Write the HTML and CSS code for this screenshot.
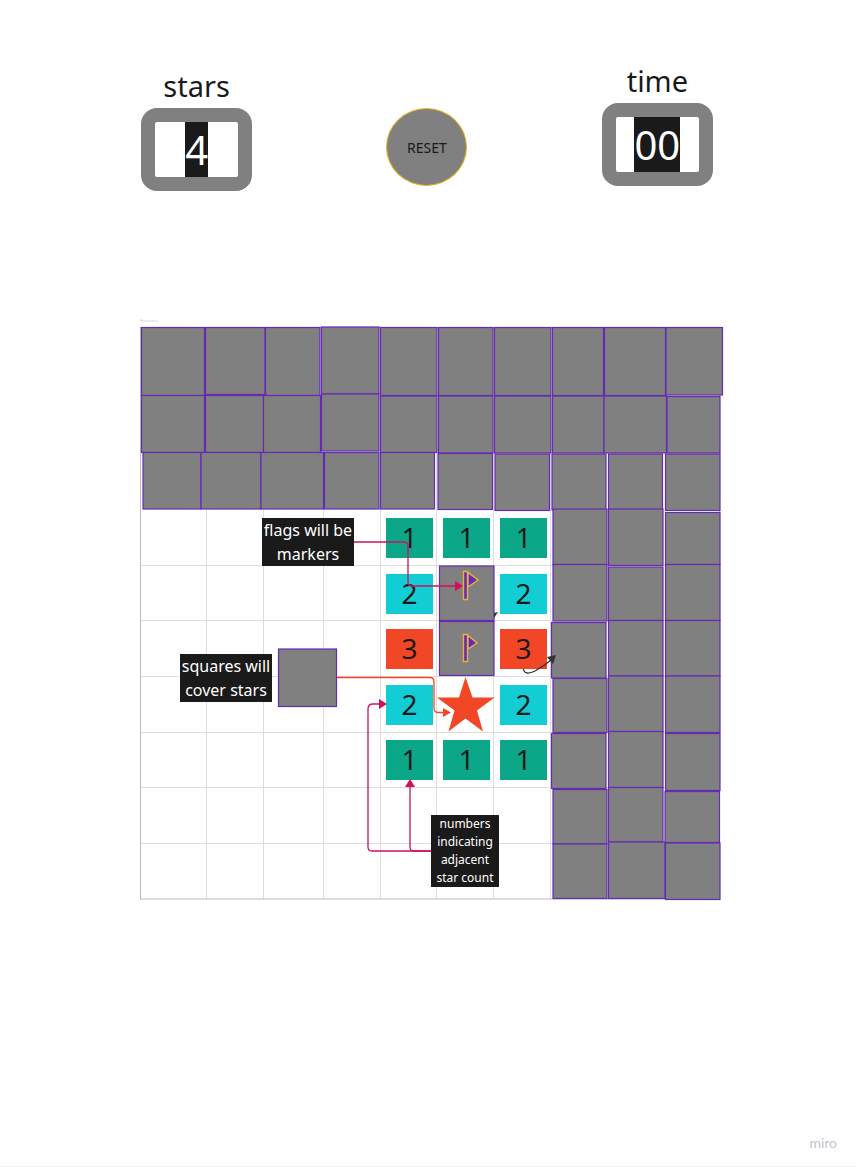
FILE: index.html
```html
<!DOCTYPE html>
<html lang="en">
<head>
<meta charset="utf-8">
<title>Star finder board</title>
<link rel="stylesheet" href="styles.css">
</head>
<body>
<main class="page">
  <header class="toolbar">
    <section class="counter">
      <h2 class="counter-label" id="stars-label">stars</h2>
      <div class="counter-frame"><output class="counter-value" aria-labelledby="stars-label">4</output></div>
    </section>
    <button class="reset" type="button">RESET</button>
    <section class="counter counter-time">
      <h2 class="counter-label" id="time-label">time</h2>
      <div class="counter-frame"><output class="counter-value" aria-labelledby="time-label">00</output></div>
    </section>
  </header>

  <section class="canvas">
    <p class="frame-title">Boundary</p>

    <svg class="layer" viewBox="140 316 584 586" aria-hidden="true">
      <g class="grid-lines">
        <path d="M206.500 327V899M263.500 327V899M323.500 327V899M380.500 327V899M436.500 327V899M493.500 327V899M550.500 327V899"/>
        <path d="M141 565.500H720M141 620.500H720M141 676.500H720M141 732.500H720M141 787.500H720M141 843.500H720"/>
      </g>
      <rect class="outline" x="140.500" y="327.500" width="579" height="571.500"/>
      <g class="tiles">
        <rect x="141.500" y="327.500" width="63" height="68"/>
        <rect x="205.500" y="327.500" width="59.500" height="67"/>
        <rect x="265.500" y="327.500" width="54.500" height="68"/>
        <rect x="321.500" y="327" width="57.500" height="67"/>
        <rect x="380.500" y="327.500" width="56.500" height="68"/>
        <rect x="438.500" y="327.500" width="54.500" height="68"/>
        <rect x="494.500" y="327.500" width="56.500" height="68"/>
        <rect x="552.500" y="327.500" width="51" height="68"/>
        <rect x="604.500" y="327.500" width="61" height="68"/>
        <rect x="666" y="327.500" width="56.500" height="67.500"/>

        <rect x="141.500" y="395.500" width="63" height="57"/>
        <rect x="205.500" y="395.500" width="58" height="57"/>
        <rect x="263.500" y="395.500" width="57" height="57"/>
        <rect x="321.500" y="394" width="57.500" height="57"/>
        <rect x="380.500" y="396" width="56.500" height="56.500"/>
        <rect x="438.500" y="396" width="54.500" height="57"/>
        <rect x="494.500" y="396" width="56.500" height="57"/>
        <rect x="552.500" y="396" width="51.500" height="57"/>
        <rect x="604" y="396" width="62.500" height="57"/>
        <rect x="667" y="396.500" width="53" height="56.500"/>

        <rect x="143" y="452.500" width="58" height="56.500"/>
        <rect x="201" y="452.500" width="60" height="56.500"/>
        <rect x="261" y="452.500" width="62.500" height="56.500"/>
        <rect x="324.500" y="452.500" width="54.500" height="56.500"/>
        <rect x="380.500" y="452.500" width="54" height="56.500"/>
        <rect x="438" y="453.500" width="54.500" height="56"/>
        <rect x="495" y="454" width="54.500" height="56.500"/>
        <rect x="552" y="454" width="54" height="56"/>
        <rect x="608.500" y="454" width="54" height="55.500"/>
        <rect x="665.500" y="454" width="54.500" height="56.500"/>

        <rect x="553" y="509" width="54" height="55.500"/>
        <rect x="553" y="564.500" width="54" height="56.500"/>
        <rect x="553" y="678.500" width="54" height="54"/>
        <rect x="551.500" y="622.500" width="54.500" height="55.500"/>
        <rect x="551.500" y="733.500" width="54.500" height="55"/>
        <rect x="553" y="789.500" width="54" height="54.500"/>
        <rect x="553" y="844" width="54" height="54.500"/>

        <rect x="608.500" y="509" width="54.500" height="56.500"/>
        <rect x="608.500" y="567" width="54.500" height="53.500"/>
        <rect x="608.500" y="620.500" width="54.500" height="55.500"/>
        <rect x="608.500" y="676" width="54.500" height="55.500"/>
        <rect x="608.500" y="731.500" width="54.500" height="56"/>
        <rect x="608.500" y="787.500" width="54.500" height="54.500"/>
        <rect x="608.500" y="842" width="56.500" height="56.500"/>

        <rect x="665.500" y="512.500" width="54.500" height="52"/>
        <rect x="665.500" y="564.500" width="54.500" height="56"/>
        <rect x="665.500" y="620.500" width="54.500" height="55.500"/>
        <rect x="665.500" y="676" width="54.500" height="56.500"/>
        <rect x="665.500" y="733.500" width="54.500" height="57"/>
        <rect x="665" y="791.500" width="54.500" height="51"/>
        <rect x="665.500" y="843" width="54.500" height="56.500"/>

        <rect x="439.500" y="566" width="54.500" height="54.500"/>
        <rect x="439.500" y="621.500" width="54.500" height="54"/>
        <rect x="278.500" y="649" width="58" height="57.500"/>
      </g>
      <path class="star" d="M465.500 677L472.500 697.500H494.500L477 710.500L483 731.500L465.500 718.500L448.500 731.500L454.500 710.500L437 697.500H459Z"/>
      <g class="flag">
        <path d="M463.500 571.500h4v28h-4zM468 572.500v14.500l10-7z"/>
        <path d="M463.500 634.500h4v27h-4zM468 635.500v13.500l9-6z"/>
      </g>
    </svg>

    <div class="numbers">
      <span class="num one">1</span><span class="num one">1</span><span class="num one">1</span>
      <span class="num two">2</span><span></span><span class="num two">2</span>
      <span class="num three">3</span><span></span><span class="num three">3</span>
      <span class="num two">2</span><span></span><span class="num two">2</span>
      <span class="num one">1</span><span class="num one">1</span><span class="num one">1</span>
    </div>

    <svg class="layer" viewBox="140 316 584 586" aria-hidden="true">
      <g class="wire pink">
        <path d="M354 542H404Q408 542 408 546V582Q408 586 412 586H456"/>
        <path d="M431 851H372Q368 851 368 847V709Q368 704 373 704H380"/>
        <path d="M431 851H414Q410 851 410 847V786"/>
        <path class="head" d="M455 581L463 586L455 591ZM379 699L387 704L379 709ZM405 787L410 779L415 787Z"/>
      </g>
      <g class="wire orange">
        <path d="M337 677.500H430Q434 677.500 434 682V708Q434 712.500 438 712.500H444"/>
        <path class="head" d="M443 708L451 712.500L443 717Z"/>
      </g>
      <g class="wire dark">
        <path d="M523.500 669C524 674 529 674 535 671Q544 666 551 660"/>
        <path class="head" d="M547 657L556 655L553 664ZM494 613L498 612L494 618Z"/>
      </g>
    </svg>

    <p class="note note-flags">flags will be markers</p>
    <p class="note note-squares">squares will cover stars</p>
    <p class="note note-small note-numbers">numbers indicating adjacent star&nbsp;count</p>
  </section>

  <footer class="footer">miro</footer>
</main>
</body>
</html>
```
FILE: styles.css
```css
* { box-sizing: border-box; }

body {
  margin: 0;
  background: #fff;
  color: #1a1a1a;
  font-family: "Noto Sans", "Open Sans", sans-serif;
}

.page {
  display: flex;
  flex-direction: column;
  align-items: center;
  min-height: 100vh;
  padding-top: 61px;
  border-bottom: 1px solid #eee;
}

/* Counters and reset */
.toolbar {
  display: flex;
  justify-content: space-between;
  align-items: flex-start;
  width: 66.8%;
  min-width: 400px;
  margin-right: 2px;
}

.counter {
  display: flex;
  flex-direction: column;
  align-items: center;
  padding-top: 5px;
}

.counter-time { padding-top: 0; }

.counter-label {
  margin: 0 0 2px;
  font-size: 29px;
  font-weight: 400;
  line-height: 40px;
}

.counter-frame {
  display: flex;
  justify-content: center;
  width: 111px;
  border: 14px solid #808080;
  border-radius: 16px;
}

.counter-value {
  background: #1a1a1a;
  color: #fff;
  font-size: 40px;
  line-height: 55px;
}

.reset {
  width: 81px;
  height: 78px;
  margin-top: 47px;
  padding: 0;
  border: 1px solid #e6b422;
  border-radius: 50%;
  background: #808080;
  color: #1a1a1a;
  font: inherit;
  font-size: 14px;
}

/* Board canvas */
.canvas {
  position: relative;
  width: 584px;
  height: 586px;
  margin-top: 125px;
  margin-left: 8px;
}

.layer {
  position: absolute;
  inset: 0;
  width: 100%;
  height: 100%;
}

.frame-title {
  margin: 0;
  color: #ccc;
  font-size: 4px;
  line-height: 10px;
}

.grid-lines { fill: none; stroke: #ddd; }
.outline { fill: none; stroke: #bbb; }
.tiles { fill: #808080; stroke: #652cb3; stroke-width: 1.2; }
.star { fill: #f24726; }
.flag { fill: #652cb3; stroke: #e9b23a; stroke-width: 1.4; }

.wire { fill: none; stroke-width: 1.3; }
.pink { stroke: #d0105f; }
.orange { stroke: #f24726; }
.dark { stroke: #333; }
.head { stroke: none; }
.pink .head { fill: #d0105f; }
.orange .head { fill: #f24726; }
.dark .head { fill: #333; }

.numbers {
  position: absolute;
  left: 246px;
  top: 202px;
  display: grid;
  grid-template-columns: repeat(3, 47px);
  grid-auto-rows: 40px;
  place-content: space-between;
  width: 161px;
  height: 262px;
}

.num {
  font-size: 28px;
  line-height: 38px;
  text-align: center;
}

.one { background: #0ca789; }
.two { background: #12cdd4; }
.three { background: #f24726; }

.note {
  position: absolute;
  width: 92px;
  margin: 0;
  background: #1a1a1a;
  color: #fff;
  font-size: 16px;
  line-height: 24px;
  text-align: center;
}

.note-flags { left: 122px; top: 202px; }
.note-squares { left: 40px; top: 338px; }

.note-small {
  width: 68px;
  font-size: 12px;
  line-height: 18px;
}

.note-numbers { left: 291px; top: 499px; }

.footer {
  align-self: flex-end;
  margin-top: auto;
  padding: 0 19px 13px 0;
  color: #c3c4cc;
  font-family: Lato, sans-serif;
  font-size: 14px;
  line-height: 20px;
}
```
